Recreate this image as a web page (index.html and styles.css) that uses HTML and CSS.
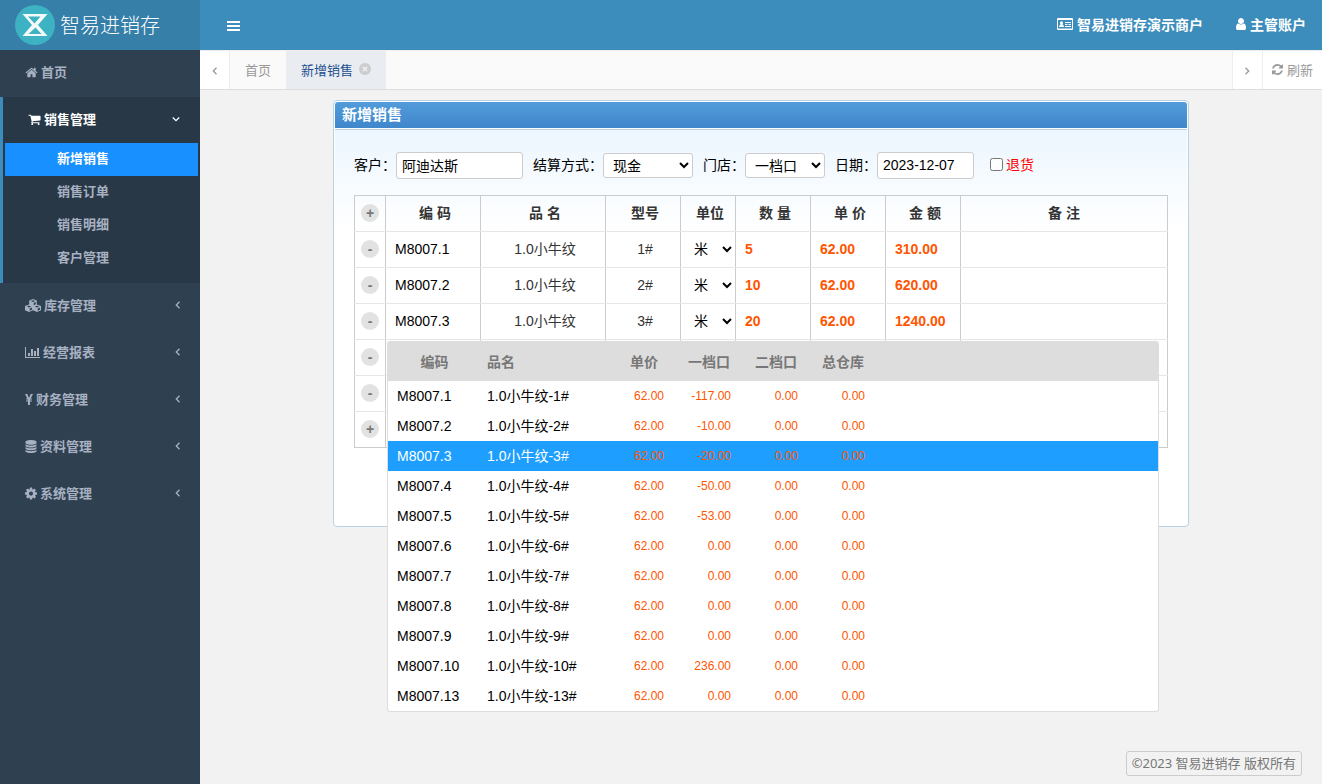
FILE: index.html
```html
<!DOCTYPE html>
<html lang="zh-CN">
<head>
    <meta charset="UTF-8">
    <meta name="viewport" content="width=device-width, initial-scale=1.0">
    <title>智易进销存 - 新增销售</title>
    <link rel="stylesheet" href="styles.css">
</head>
<body>

    <!-- shared icons -->
    <svg class="icon-defs" aria-hidden="true">
        <symbol id="i-home" viewBox="0 0 1792 1792"><path d="M1472 992v480q0 26-19 45t-45 19h-384v-384h-256v384h-384q-26 0-45-19t-19-45v-480q0-1 .5-3t.5-3l575-474 575 474q1 2 1 6zm223-69l-62 74q-8 9-21 11h-3q-13 0-21-7l-692-577-692 577q-12 8-24 7-13-2-21-11l-62-74q-8-10-7-23.5t11-21.5l719-599q32-26 76-26t76 26l244 204v-195q0-14 9-23t23-9h192q14 0 23 9t9 23v408l219 182q10 8 11 21.5t-7 23.5z"/></symbol>
        <symbol id="i-cart" viewBox="0 0 1792 1792"><path d="M704 1536q0 52-38 90t-90 38-90-38-38-90 38-90 90-38 90 38 38 90zm896 0q0 52-38 90t-90 38-90-38-38-90 38-90 90-38 90 38 38 90zm128-1088v512q0 24-16.500 42.500t-40.500 21.500l-1044 122q13 60 13 70 0 16-24 64h920q26 0 45 19t19 45-19 45-45 19h-1024q-26 0-45-19t-19-45q0-11 8-31.500t16-36 21.500-40 15.500-29.500l-177-823h-204q-26 0-45-19t-19-45 19-45 45-19h256q16 0 28.500 6.500t19.500 15.500 13 24.500 8 26 5.500 29.500 4.500 26h1201q26 0 45 19t19 45z"/></symbol>
        <symbol id="i-cubes" viewBox="0 0 16 13"><path fill-rule="evenodd" d="M8 0l3.800 1.400v4.100L16 7v4.300L12 13l-4-1.700L4 13l-4-1.700V7l4.200-1.500V1.400zM8 1.200L5.800 2 8 2.900l2.200-.9zM8.700 4v2.200l2-.9V3.100zM4 6.700L1.800 7.500 4 8.400l2.200-.9zM12 6.700l-2.200.8 2.200.9 2.200-.9zM4.700 9.500v2.200l2.200-1V8.600zM12.700 9.500v2.200l2.200-1V8.600z"/></symbol>
        <symbol id="i-chart" viewBox="0 0 15 13"><path d="M0 1h1v10h14v1H0zM3 7h2v3H3zM6 3h2v7H6zM9 5h2v5H9zM12 2h2v8h-2z"/></symbol>
        <symbol id="i-yen" viewBox="0 0 8 13"><path d="M0 1h2.300L4 5l1.700-4H8L5.700 5.500H7v1H5v1h2v1H5V12H3V8.500H1v-1h2v-1H1v-1h1.300z"/></symbol>
        <symbol id="i-database" viewBox="128 0 1536 1792"><path d="M896 768q237 0 443-43t325-127v170q0 69-103 128t-280 93.500-385 34.500-385-34.500-280-93.500-103-128v-170q119 84 325 127t443 43zm0 768q237 0 443-43t325-127v170q0 69-103 128t-280 93.500-385 34.500-385-34.500-280-93.500-103-128v-170q119 84 325 127t443 43zm0-384q237 0 443-43t325-127v170q0 69-103 128t-280 93.500-385 34.500-385-34.500-280-93.500-103-128v-170q119 84 325 127t443 43zm0-1152q208 0 385 34.500t280 93.500 103 128v128q0 69-103 128t-280 93.500-385 34.500-385-34.500-280-93.500-103-128v-128q0-69 103-128t280-93.500 385-34.500z"/></symbol>
        <symbol id="i-cog" viewBox="128 128 1536 1536"><path d="M1152 896q0-106-75-181t-181-75-181 75-75 181 75 181 181 75 181-75 75-181zm512-109v222q0 12-8 23t-20 13l-185 28q-19 54-39 91 35 50 107 138 10 12 10 25t-9 23q-27 37-99 108t-94 71q-12 0-26-9l-138-108q-44 23-91 38-16 136-29 186-7 28-36 28h-222q-14 0-24.500-8.500t-11.500-21.500l-28-184q-49-16-90-37l-141 107q-10 9-25 9-14 0-25-11-126-114-165-168-7-10-7-23 0-12 8-23 15-21 51-66.500t54-70.500q-27-50-41-99l-183-27q-13-2-21-12.500t-8-23.500v-222q0-12 8-23t19-13l186-28q14-46 39-92-40-57-107-138-10-12-10-24 0-10 9-23 26-36 98.500-107.500t94.500-71.500q13 0 26 10l138 107q44-23 91-38 16-136 29-186 7-28 36-28h222q14 0 24.500 8.500t11.500 21.500l28 184q49 16 90 37l142-107q9-9 24-9 13 0 25 10 129 119 165 170 7 8 7 22 0 12-8 23-15 21-51 66.500t-54 70.500q26 50 41 98l183 28q13 2 21 12.500t8 23.500z"/></symbol>
        <symbol id="i-user" viewBox="256 128 1280 1536"><path d="M1536 1399q0 109-62.500 187t-150.500 78h-854q-88 0-150.500-78t-62.500-187q0-85 8.500-160.500t31.500-152 58.500-131 94-89 134.500-34.500q131 128 313 128t313-128q76 0 134.500 34.500t94 89 58.500 131 31.500 152 8.500 160.500zm-256-887q0 159-112.500 271.500t-271.500 112.500-271.500-112.500-112.500-271.500 112.500-271.500 271.500-112.500 271.500 112.500 112.500 271.500z"/></symbol>
        <symbol id="i-card" viewBox="0 0 16 12"><path fill-rule="evenodd" d="M1 0h14q1 0 1 1v10q0 1-1 1H1q-1 0-1-1V1q0-1 1-1zM1 2v8.500h14V2zM2 9q0-2 1.500-2.300Q3 6 3 5q0-1.700 1.500-1.700T6 5q0 1-.5 1.700Q7 7 7 9zM8 4h6v1H8zM8 6h2.500v1H8zM11.500 6H14v1h-2.500zM8 8h6v1H8z"/></symbol>
        <symbol id="i-refresh" viewBox="128 128 1536 1536"><path d="M1639 1056q0 5-1 7-64 268-268 434.500t-478 166.500q-146 0-282.500-55t-243.500-157l-129 129q-19 19-45 19t-45-19-19-45v-448q0-26 19-45t45-19h448q26 0 45 19t19 45-19 45l-137 137q71 66 161 102t187 36q134 0 250-65t186-179q11-17 53-117 8-23 30-23h192q13 0 22.500 9.500t9.500 22.500zm25-800v448q0 26-19 45t-45 19h-448q-26 0-45-19t-19-45 19-45l138-138q-148-137-349-137-134 0-250 65t-186 179q-11 17-53 117-8 23-30 23h-199q-13 0-22.500-9.500t-9.500-22.500v-7q65-268 270-434.500t480-166.500q146 0 284 55.500t245 156.500l130-129q19-19 45-19t45 19 19 45z"/></symbol>
        <symbol id="i-angle" viewBox="0 0 8 8"><path d="M5.500 .8L2.300 4l3.200 3.200" fill="none" stroke="currentColor" stroke-width="1.300"/></symbol>
        <symbol id="i-bars" viewBox="0 0 13 10"><path d="M0 0h13v2H0zM0 4h13v2H0zM0 8h13v2H0z"/></symbol>
        <symbol id="i-close" viewBox="0 0 12 12"><circle cx="6" cy="6" r="6"/><path d="M3.800 3.800l4.400 4.400M8.200 3.800L3.800 8.200" stroke="#e9edf2" stroke-width="1.800"/></symbol>
    </svg>

    <div class="layout">
        <aside class="sidebar">
            <a class="logo" href="#">
                <svg class="logo-mark" viewBox="0 0 40 40" aria-hidden="true">
                    <circle cx="20" cy="20" r="20" fill="#3cb2c2"/>
                    <path fill="#f4fafa" fill-rule="evenodd" d="M7.500 9h25L23 20l9.500 11h-25L17 20zM13 11.500l6.500 7 6-7zM20.500 22.500l-7 6.500h13z"/>
                </svg>
                <span>智易进销存</span>
            </a>
            <nav>
                <ul class="menu">
                    <li><a class="menu-link" href="#"><svg class="icon w13"><use href="#i-home"/></svg>首页</a></li>
                    <li class="open">
                        <a class="menu-link" href="#"><svg class="icon w13"><use href="#i-cart"/></svg>销售管理<svg class="arrow"><use href="#i-angle"/></svg></a>
                        <ul class="submenu">
                            <li><a class="active" href="#">新增销售</a></li>
                            <li><a href="#">销售订单</a></li>
                            <li><a href="#">销售明细</a></li>
                            <li><a href="#">客户管理</a></li>
                        </ul>
                    </li>
                    <li><a class="menu-link" href="#"><svg class="icon w16"><use href="#i-cubes"/></svg>库存管理<svg class="arrow"><use href="#i-angle"/></svg></a></li>
                    <li><a class="menu-link" href="#"><svg class="icon w15"><use href="#i-chart"/></svg>经营报表<svg class="arrow"><use href="#i-angle"/></svg></a></li>
                    <li><a class="menu-link" href="#"><svg class="icon w8"><use href="#i-yen"/></svg>财务管理<svg class="arrow"><use href="#i-angle"/></svg></a></li>
                    <li><a class="menu-link" href="#"><svg class="icon w12"><use href="#i-database"/></svg>资料管理<svg class="arrow"><use href="#i-angle"/></svg></a></li>
                    <li><a class="menu-link" href="#"><svg class="icon w12"><use href="#i-cog"/></svg>系统管理<svg class="arrow"><use href="#i-angle"/></svg></a></li>
                </ul>
            </nav>
        </aside>

        <div class="page">
            <header class="topbar">
                <button type="button" class="toggle" aria-label="折叠菜单"><svg><use href="#i-bars"/></svg></button>
                <a class="shop" href="#"><svg class="card-icon"><use href="#i-card"/></svg>智易进销存演示商户</a>
                <a class="account" href="#"><svg class="user-icon"><use href="#i-user"/></svg>主管账户</a>
            </header>

            <div class="tabs">
                <button type="button" class="tab-nav prev" aria-label="向左"><svg><use href="#i-angle"/></svg></button>
                <nav class="tab-list">
                    <a class="tab" href="#">首页</a>
                    <a class="tab active" href="#">新增销售<svg><use href="#i-close"/></svg></a>
                </nav>
                <button type="button" class="tab-nav next" aria-label="向右"><svg><use href="#i-angle"/></svg></button>
                <button type="button" class="refresh"><svg><use href="#i-refresh"/></svg>刷新</button>
            </div>

            <main class="content">
                <section class="panel">
                    <h1 class="panel-title">新增销售</h1>
                    <form class="panel-body">
                        <div class="fields">
                            <div class="field">
                                <label for="customer">客户：</label>
                                <input type="text" id="customer" class="customer" value="阿迪达斯">
                            </div>
                            <div class="field">
                                <label for="payment">结算方式：</label>
                                <select id="payment" class="payment"><option>现金</option></select>
                            </div>
                            <div class="field">
                                <label for="store">门店：</label>
                                <select id="store" class="store"><option>一档口</option></select>
                            </div>
                            <div class="field">
                                <label for="date">日期：</label>
                                <input type="text" id="date" class="date" value="2023-12-07">
                            </div>
                            <div class="field return">
                                <input type="checkbox" id="isReturn">
                                <label for="isReturn">退货</label>
                            </div>
                        </div>

                        <div class="order">
                            <table class="order-table">
                                <colgroup>
                                    <col class="c-op"><col class="c-code"><col class="c-name"><col class="c-num"><col class="c-unit"><col class="c-num"><col class="c-num"><col class="c-num"><col>
                                </colgroup>
                                <thead>
                                    <tr>
                                        <th><button type="button" class="round" aria-label="添加">+</button></th>
                                        <th>编 码</th><th>品 名</th><th>型号</th><th>单位</th><th>数 量</th><th>单 价</th><th>金 额</th><th>备 注</th>
                                    </tr>
                                </thead>
                                <tbody>
                                    <tr>
                                        <td><button type="button" class="round" aria-label="删除">-</button></td>
                                        <td><input type="text" aria-label="编码" value="M8007.1"></td>
                                        <td class="text">1.0小牛纹</td>
                                        <td class="text">1#</td>
                                        <td><select aria-label="单位"><option>米</option></select></td>
                                        <td><input type="text" class="money" aria-label="数量" value="5"></td>
                                        <td><input type="text" class="money" aria-label="单价" value="62.00"></td>
                                        <td><input type="text" class="money" aria-label="金额" value="310.00"></td>
                                        <td></td>
                                    </tr>
                                    <tr>
                                        <td><button type="button" class="round" aria-label="删除">-</button></td>
                                        <td><input type="text" aria-label="编码" value="M8007.2"></td>
                                        <td class="text">1.0小牛纹</td>
                                        <td class="text">2#</td>
                                        <td><select aria-label="单位"><option>米</option></select></td>
                                        <td><input type="text" class="money" aria-label="数量" value="10"></td>
                                        <td><input type="text" class="money" aria-label="单价" value="62.00"></td>
                                        <td><input type="text" class="money" aria-label="金额" value="620.00"></td>
                                        <td></td>
                                    </tr>
                                    <tr>
                                        <td><button type="button" class="round" aria-label="删除">-</button></td>
                                        <td><input type="text" aria-label="编码" value="M8007.3"></td>
                                        <td class="text">1.0小牛纹</td>
                                        <td class="text">3#</td>
                                        <td><select aria-label="单位"><option>米</option></select></td>
                                        <td><input type="text" class="money" aria-label="数量" value="20"></td>
                                        <td><input type="text" class="money" aria-label="单价" value="62.00"></td>
                                        <td><input type="text" class="money" aria-label="金额" value="1240.00"></td>
                                        <td></td>
                                    </tr>
                                    <tr><td><button type="button" class="round" aria-label="删除">-</button></td><td></td><td></td><td></td><td></td><td></td><td></td><td></td><td></td></tr>
                                    <tr><td><button type="button" class="round" aria-label="删除">-</button></td><td></td><td></td><td></td><td></td><td></td><td></td><td></td><td></td></tr>
                                    <tr><td><button type="button" class="round" aria-label="添加">+</button></td><td></td><td></td><td></td><td></td><td></td><td></td><td></td><td></td></tr>
                                </tbody>
                            </table>

                            <!-- product suggestions for the code cell -->
                            <div class="suggest">
                                <table>
                                    <colgroup>
                                        <col class="s-code"><col class="s-name"><col class="s-price"><col class="s-stock"><col class="s-stock"><col class="s-stock"><col>
                                    </colgroup>
                                    <thead>
                                        <tr><th>编码</th><th>品名</th><th>单价</th><th>一档口</th><th>二档口</th><th>总仓库</th><th></th></tr>
                                    </thead>
                                    <tbody>
                                        <tr><td>M8007.1</td><td>1.0小牛纹-1#</td><td>62.00</td><td>-117.00</td><td>0.00</td><td>0.00</td><td></td></tr>
                                        <tr><td>M8007.2</td><td>1.0小牛纹-2#</td><td>62.00</td><td>-10.00</td><td>0.00</td><td>0.00</td><td></td></tr>
                                        <tr class="selected"><td>M8007.3</td><td>1.0小牛纹-3#</td><td>62.00</td><td>-20.00</td><td>0.00</td><td>0.00</td><td></td></tr>
                                        <tr><td>M8007.4</td><td>1.0小牛纹-4#</td><td>62.00</td><td>-50.00</td><td>0.00</td><td>0.00</td><td></td></tr>
                                        <tr><td>M8007.5</td><td>1.0小牛纹-5#</td><td>62.00</td><td>-53.00</td><td>0.00</td><td>0.00</td><td></td></tr>
                                        <tr><td>M8007.6</td><td>1.0小牛纹-6#</td><td>62.00</td><td>0.00</td><td>0.00</td><td>0.00</td><td></td></tr>
                                        <tr><td>M8007.7</td><td>1.0小牛纹-7#</td><td>62.00</td><td>0.00</td><td>0.00</td><td>0.00</td><td></td></tr>
                                        <tr><td>M8007.8</td><td>1.0小牛纹-8#</td><td>62.00</td><td>0.00</td><td>0.00</td><td>0.00</td><td></td></tr>
                                        <tr><td>M8007.9</td><td>1.0小牛纹-9#</td><td>62.00</td><td>0.00</td><td>0.00</td><td>0.00</td><td></td></tr>
                                        <tr><td>M8007.10</td><td>1.0小牛纹-10#</td><td>62.00</td><td>236.00</td><td>0.00</td><td>0.00</td><td></td></tr>
                                        <tr><td>M8007.13</td><td>1.0小牛纹-13#</td><td>62.00</td><td>0.00</td><td>0.00</td><td>0.00</td><td></td></tr>
                                    </tbody>
                                </table>
                            </div>
                        </div>
                    </form>
                </section>
            </main>

            <footer class="footer"><span>©2023 智易进销存 版权所有</span></footer>
        </div>
    </div>

</body>
</html>
```
FILE: styles.css
```css
:root {
    --blue: #3c8dbc;
    --blue-dark: #367fa9;
    --side-bg: #2f4050;
    --side-open: #293846;
    --side-text: #a7b1c2;
    --line: #ccc;
    --money: #ff5500;
    --font-ui: "Noto Sans", "Noto Sans CJK SC", sans-serif;
    --font-form: "Liberation Sans", "Noto Sans CJK SC", sans-serif;
}
*, *::before, *::after { box-sizing: border-box; }
body { margin: 0; font-family: var(--font-ui); font-size: 13px; background: #f2f2f2; color: #333; }
a { text-decoration: none; color: inherit; }
ul { list-style: none; margin: 0; padding: 0; }
button { font: inherit; color: inherit; border: 0; padding: 0; background: none; cursor: pointer; }
svg { fill: currentColor; flex-shrink: 0; }
.icon-defs { display: none; }
.layout { display: flex; min-height: 100vh; }

/* sidebar */
.sidebar { width: 200px; flex-shrink: 0; background: var(--side-bg); color: var(--side-text); }
.logo { display: flex; align-items: center; gap: 5px; height: 50px; padding-left: 15px; background: var(--blue-dark); color: #fff; font-size: 20px; font-weight: 300; }
.logo span { padding-bottom: 2px; }
.logo-mark { width: 40px; height: 40px; }
.menu-link { display: flex; align-items: center; gap: 3px; padding: 13px 18px 16px 25px; line-height: 18px; font-weight: 600; }
.icon { height: 13px; }
.w8 { width: 8px; }
.w12 { width: 12px; }
.w13 { width: 13px; }
.w15 { width: 15px; }
.w16 { width: 16px; }
.arrow { width: 8px; height: 8px; margin-left: auto; }
.open { background: var(--side-open); border-left: 3px solid var(--blue); padding-bottom: 8px; }
.open .menu-link { color: #fff; padding-right: 20px; padding-bottom: 15px; }
.open .arrow { transform: rotate(-90deg); }
.submenu a { display: block; margin: 0 2px; padding: 6px 0 9px 52px; line-height: 18px; font-weight: 600; }
.submenu a.active { background: #1890ff; color: #fff; }

/* top bar */
.page { flex: 1; min-width: 0; display: flex; flex-direction: column; }
.topbar { display: flex; align-items: center; height: 50px; padding: 0 16px 0 27px; background: var(--blue); color: #fff; font-size: 14px; font-weight: 700; }
.topbar a { display: flex; align-items: center; gap: 4px; padding-bottom: 2px; }
.toggle { display: flex; margin-right: auto; padding-top: 2px; }
.toggle svg { width: 13px; height: 10px; }
.account { margin-left: 33px; }
.card-icon { width: 16px; height: 12px; }
.user-icon { width: 10px; height: 12px; }

/* tabs */
.tabs { display: flex; height: 40px; background: #fafafa; border-top: 1px solid #eee; border-bottom: 1px solid #ddd; color: #999; }
.tabs button { display: flex; align-items: center; justify-content: center; background: #fff; }
.tab-nav { padding-top: 2px; }
.tab-nav svg { width: 8px; height: 8px; }
.prev { width: 30px; border-right: 1px solid #eee; }
.next { width: 31px; border-left: 1px solid #eee; border-right: 1px solid #eee; }
.next svg { transform: rotate(180deg); }
.tab-list { display: flex; flex: 1; }
.tab { display: flex; align-items: center; gap: 6px; padding: 0 15px 2px; }
.tab.active { background: #e9edf2; color: #23508e; }
.tab svg { width: 12px; height: 12px; color: #ccc; }
.tabs .refresh { gap: 4px; padding: 0 9px 2px; }
.refresh svg { width: 11px; height: 11px; }

/* panel */
.content { padding: 10px; }
.panel { max-width: 856px; min-height: 427px; margin: 0 auto; padding: 1px; border: 1px solid #b7d2e3; border-radius: 4px; background: #fff; }
.panel-title { margin: 0; padding: 0 7px 1px; font-size: 15px; line-height: 25px; font-weight: 700; color: #fff; background: linear-gradient(#529cdb, #3f86cb); border-radius: 3px 3px 0 0; }
.panel-body { margin-top: 1px; padding: 22px 19px 0; border-top: 1px solid #b7d2e3; background: linear-gradient(#ecf6fe, #fff 100px); font-family: var(--font-form); font-size: 14px; color: #000; }
.fields { display: flex; flex-wrap: wrap; align-items: center; gap: 10px; margin-bottom: 16px; }
.field { display: flex; align-items: center; }
.field label { padding-bottom: 3px; }
.field input[type="text"], .field select { border: 1px solid var(--line); border-radius: 3px; background: #fff; font: inherit; color: #000; }
.field input[type="text"] { height: 27px; padding: 0 5px 2px; }
.field select { height: 25px; padding: 0 5px; }
.customer { width: 127px; }
.payment { width: 90px; }
.store { width: 80px; }
.date { width: 97px; }
.return { margin-left: 6px; gap: 3px; color: #f00; }
.return input { width: 13px; height: 13px; margin: 0 0 3px; }

/* order table */
.order { position: relative; }
.order-table { width: 100%; table-layout: fixed; border-collapse: collapse; color: #333; }
.order-table tr { height: 36px; background: #fff; }
.order-table thead tr { background: none; }
.order-table th, .order-table td { padding: 0 0 2px; border: 1px solid var(--line); border-bottom-color: #e6e6e6; border-top-color: #e6e6e6; text-align: center; line-height: 20px; }
.order-table th { border-top-color: var(--line); }
.order-table th:not(:first-child), .order-table .text { padding-left: 4px; }
.order-table th:last-child { padding-left: 0; }
.order-table tr:last-child td { border-bottom-color: var(--line); }
.c-op { width: 31px; }
.c-code { width: 95px; }
.c-name { width: 125px; }
.c-num { width: 75px; }
.c-unit { width: 55px; }
.order-table input, .order-table select { display: block; width: 100%; height: 28px; border: 0; background: transparent; font: inherit; color: #000; }
.order-table input { padding: 0 9px; }
.order-table select { padding-left: 9px; }
.order-table .money { color: var(--money); font-weight: 700; }
.round { display: block; width: 18px; height: 18px; margin: 0 auto; border-radius: 50%; background: #e2e2e2; color: #777; font-weight: 700; line-height: 18px; text-align: center; }

/* suggestions */
.suggest { position: absolute; left: 33px; top: 146px; width: 772px; z-index: 10; border: 1px solid #ddd; border-top: 0; border-radius: 3px; background: #fff; overflow: hidden; }
.suggest table { width: 100%; table-layout: fixed; border-collapse: collapse; }
.suggest th { height: 40px; padding: 2px 11px 0; background: #ddd; color: #777; text-align: right; line-height: 20px; }
.suggest td { height: 30px; padding: 0 10px; color: var(--money); font-size: 12px; text-align: right; line-height: 20px; }
.suggest th:nth-child(3) { padding-right: 16px; }
.suggest td:nth-child(-n+2) { padding: 0 9px; text-align: left; color: #000; font-size: 14px; }
.suggest th:nth-child(2) { padding-left: 9px; text-align: left; }
.suggest th:first-child { padding-left: 14px; text-align: center; }
.suggest .selected { background: #1e9fff; }
.suggest .selected td:nth-child(-n+2) { color: #fff; }
.s-code { width: 90px; }
.s-name { width: 136px; }
.s-price { width: 60px; }
.s-stock { width: 67px; }

.footer { display: flex; justify-content: flex-end; margin-top: auto; padding: 0 20px 8px; }
.footer span { padding: 0 5px; border: 1px solid #ccc; border-radius: 3px; color: #777; line-height: 23px; }
```
